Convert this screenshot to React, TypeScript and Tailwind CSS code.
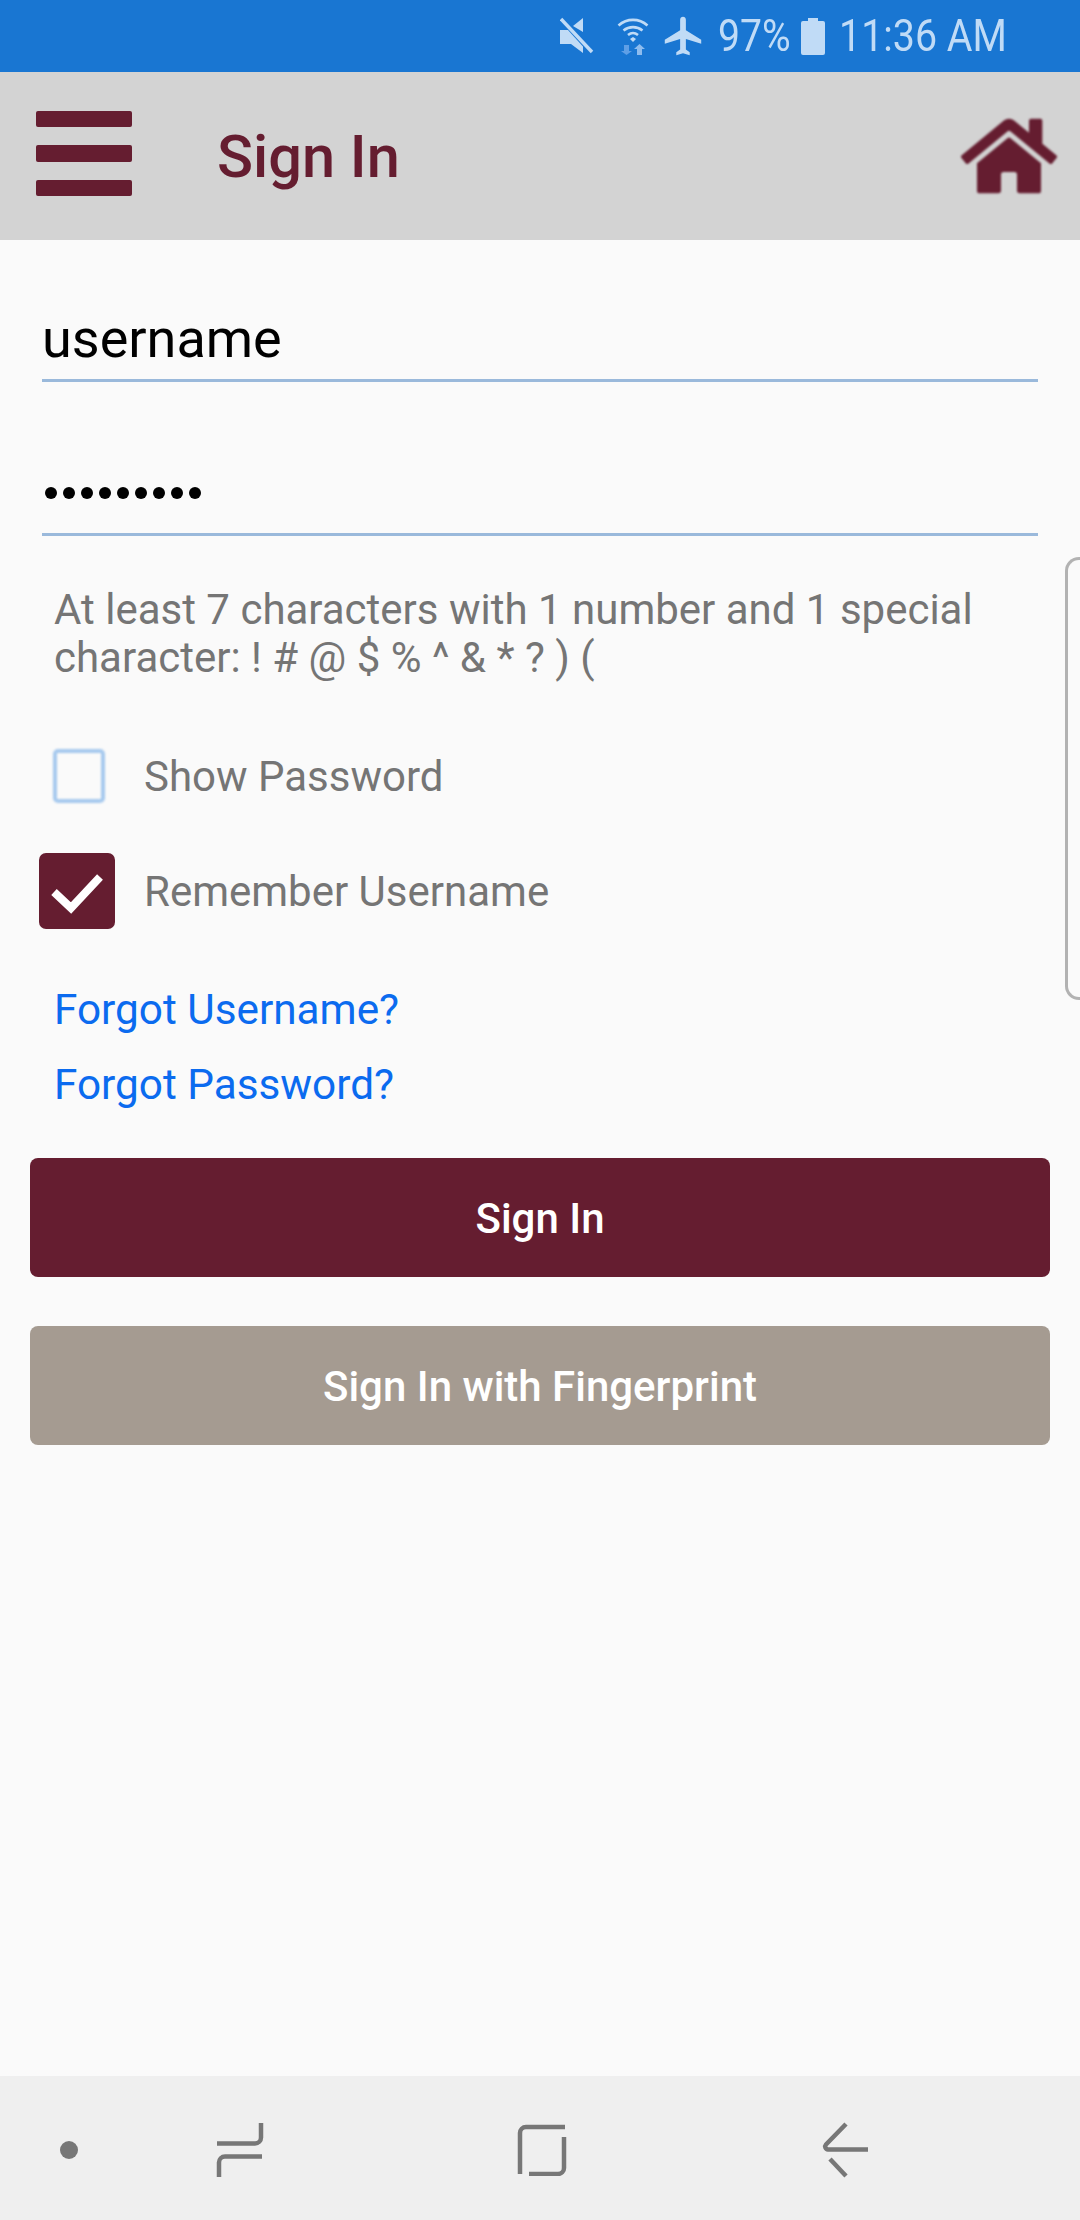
import { FaHome } from "react-icons/fa";

const font = { fontFamily: "Roboto, sans-serif" };

function StatusBar() {
  return (
    <div className="h-[72px] bg-[#1976d2] flex items-center justify-end pr-[76px] text-[#c0dbf6] shrink-0">
      <svg className="w-[34px] h-[38px] mr-[23px]" viewBox="0 0 34 38">
        <path d="M0 13h7l2 0 14 14v9l-12-9H0z M13 9l10-8v14z M23 16" fill="currentColor" />
        <path d="M2 2l30 33" stroke="#1976d2" strokeWidth="6" />
        <path d="M1 2l31 33" stroke="currentColor" strokeWidth="3.4" />
      </svg>
      <svg className="w-[32px] h-[38px] mr-[11px]" viewBox="0 0 32 38">
        <path d="M1.5 8.500C10 1 22 1 30.500 8.500" fill="none" stroke="currentColor" strokeWidth="2.6" />
        <path d="M6.500 13.500C12 9 20 9 25.500 13.500" fill="none" stroke="currentColor" strokeWidth="2.6" />
        <path d="M11 18c3-2.400 7-2.400 10 0" fill="none" stroke="currentColor" strokeWidth="2.6" />
        <path d="M13 22l3-2 3 2-3 3z" fill="currentColor" />
        <path d="M7 28h5v6h3l-5.500 4-5.500-4h3z" fill="#5f9fe6" />
        <path d="M20 38v-6h-3l5.500-5 5.500 5h-3v6z" fill="#8ebcee" />
      </svg>
      <svg className="w-[46px] h-[46px] mr-[12px]" viewBox="0 0 24 24">
        <path d="M21 16v-2l-8-5V3.500C13 2.670 12.330 2 11.500 2S10 2.670 10 3.500V9l-8 5v2l8-2.500V19l-2 1.500V22l3.500-1 3.500 1v-1.500L13 19v-5.500z" fill="currentColor" transform="translate(.5 0)" />
      </svg>
      <span className="text-[44px] leading-none inline-block w-[70px] mr-[13px] origin-left scale-x-[0.89] whitespace-nowrap" style={font}>97%</span>
      <svg className="w-[24px] h-[37px] mr-[14px]" viewBox="0 0 24 37">
        <path d="M7 0h10v3h5a2 2 0 0 1 2 2v30a2 2 0 0 1-2 2H2a2 2 0 0 1-2-2V5a2 2 0 0 1 2-2h5z" fill="currentColor" />
      </svg>
      <span className="text-[44px] leading-none inline-block w-[165px] origin-left scale-x-[0.895] whitespace-nowrap" style={font}>11:36 AM</span>
    </div>
  );
}

function Header() {
  return (
    <div className="h-[168px] bg-[#d3d3d3] flex items-center pl-[36px] pr-[23px] shrink-0 text-[#651d30]">
      <svg className="w-[96px] h-[86px] self-start mt-[39px] blur-[0.7px]" viewBox="0 0 96 86">
        <rect x="0" y="0" width="96" height="16" rx="2" fill="currentColor" />
        <rect x="0" y="34" width="96" height="17" rx="2" fill="currentColor" />
        <rect x="0" y="69" width="96" height="16" rx="2" fill="currentColor" />
      </svg>
      <h1 className="ml-[85px] flex-1 text-[59.5px] font-medium leading-none pt-[4px]" style={font}>Sign In</h1>
      <FaHome className="w-[96px] h-[96px] blur-[1px]" />
    </div>
  );
}

function Field({ children, className }: { children: React.ReactNode; className: string }) {
  return (
    <div className={`mx-[42px] border-b-[3px] border-[#9ab9db] flex items-center text-black ${className}`}>{children}</div>
  );
}

function Check({ checked }: { checked: boolean }) {
  return checked ? (
    <div className="w-[144px] pl-[39px] shrink-0">
      <div className="w-[76px] h-[76px] rounded-[7px] bg-[#651d30] blur-[0.7px]">
        <svg className="w-[76px] h-[76px]" viewBox="0 0 76 76">
          <path d="M15 39l17 16 29-31" fill="none" stroke="#fff" strokeWidth="8" />
        </svg>
      </div>
    </div>
  ) : (
    <div className="w-[144px] pl-[53px] shrink-0">
      <div className="w-[52px] h-[54px] rounded-[5px] border-[4px] border-[#a6c9ee] blur-[1px]" />
    </div>
  );
}

function Main() {
  return (
    <div className="flex-1 bg-[#fafafa] flex flex-col relative" style={font}>
      <Field className="mt-[44px] h-[98px] pt-[14px] text-[54px] leading-none">username</Field>
      <Field className="mt-[51px] h-[103px]">
        <div className="flex gap-[6px] mt-[19px] ml-[3px]">
          {Array.from({ length: 9 }).map((_, i) => (
            <span key={i} className="w-[12px] h-[12px] rounded-full bg-black" />
          ))}
        </div>
      </Field>
      <p className="mt-[50px] mx-[54px] text-[42px] leading-[48px] text-[#757575]">
        At least 7 characters with 1 number and 1 special character: ! # @ $ % ^ &amp; * ? ) (
      </p>
      <div className="mt-[67px] h-[54px] flex items-center">
        <Check checked={false} />
        <span className="text-[42px] text-[#757575]">Show Password</span>
      </div>
      <div className="mt-[50px] h-[76px] flex items-center">
        <Check checked />
        <span className="text-[42px] text-[#757575]">Remember Username</span>
      </div>
      <div className="mt-[57px] ml-[54px] flex flex-col gap-[27px] text-[42.3px] leading-[48px] text-[#0b6bef]">
        <span>Forgot Username?</span>
        <span>Forgot Password?</span>
      </div>
      <button className="mt-[49px] mx-[30px] h-[119px] pt-[2px] rounded-[8px] bg-[#651d30] text-white text-[42px] font-medium">Sign In</button>
      <button className="mt-[49px] mx-[30px] h-[119px] pt-[2px] rounded-[8px] bg-[#a59b91] text-white text-[42px] font-medium">Sign In with Fingerprint</button>
      <div className="absolute right-0 top-[317px] w-[15px] h-[443px] border-[3px] border-r-0 border-[#b2b2b2] rounded-l-[14px]" />
    </div>
  );
}

function NavBar() {
  return (
    <div className="h-[144px] pt-[4px] bg-[#efefef] shrink-0 flex items-center text-[#777] relative">
      <svg className="ml-[60px] w-[18px] h-[18px]" viewBox="0 0 18 18"><circle cx="9" cy="9" r="9" fill="currentColor" /></svg>
      <svg className="ml-[138px] w-[48px] h-[56px]" viewBox="0 0 48 56" fill="none" stroke="currentColor" strokeWidth="4.500">
        <path d="M1 21.500h38a6 6 0 0 0 6-6V1" />
        <path d="M46 34.500H9a6 6 0 0 0-6 6V55" />
      </svg>
      <svg className="ml-[253px] w-[50px] h-[52px]" viewBox="0 0 50 52" fill="none" stroke="currentColor" strokeWidth="4.500">
        <path d="M3 50V9a6 6 0 0 1 6-6h39" />
        <path d="M47 13v31a6 6 0 0 1-6 6H12" />
      </svg>
      <svg className="ml-[255px] w-[48px] h-[56px]" viewBox="0 0 48 56" fill="none" stroke="currentColor" strokeWidth="4.500">
        <path d="M24 2L4 22.500a3 3 0 0 0 2 5h40" />
        <path d="M8 37l16 17" />
      </svg>
    </div>
  );
}

export default function App() {
  return (
    <div className="w-[1080px] h-[2220px] flex flex-col overflow-hidden">
      <StatusBar />
      <Header />
      <Main />
      <NavBar />
    </div>
  );
}
